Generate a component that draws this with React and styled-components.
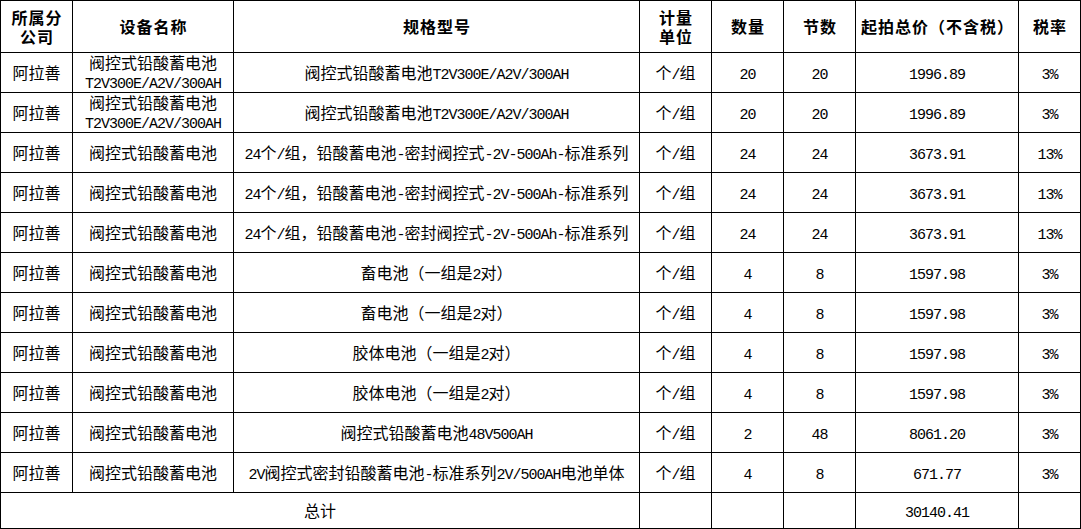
import styled, { createGlobalStyle } from "styled-components";

const GlobalStyle = createGlobalStyle`
  html, body {
    margin: 0;
    padding: 0;
    background: #fff;
  }
  body {
    font-family: "Noto Sans CJK SC", "Liberation Sans", sans-serif;
    color: #000;
  }
`;

const widths = [72, 161, 406, 72, 72, 72, 163, 62];

const heads = ["所属分\n公司", "设备名称", "规格型号", "计量\n单位", "数量", "节数", "起拍总价（不含税）", "税率"];

const SAMPLE_A = ["阿拉善", "阀控式铅酸蓄电池\nT2V300E/A2V/300AH", "阀控式铅酸蓄电池T2V300E/A2V/300AH", "个/组", "20", "20", "1996.89", "3%"];
const SAMPLE_B = ["阿拉善", "阀控式铅酸蓄电池", "24个/组，铅酸蓄电池-密封阀控式-2V-500Ah-标准系列", "个/组", "24", "24", "3673.91", "13%"];
const SAMPLE_C = ["阿拉善", "阀控式铅酸蓄电池", "畜电池（一组是2对）", "个/组", "4", "8", "1597.98", "3%"];
const SAMPLE_D = ["阿拉善", "阀控式铅酸蓄电池", "胶体电池（一组是2对）", "个/组", "4", "8", "1597.98", "3%"];

const rows = [
  SAMPLE_A,
  SAMPLE_A,
  SAMPLE_B,
  SAMPLE_B,
  SAMPLE_B,
  SAMPLE_C,
  SAMPLE_C,
  SAMPLE_D,
  SAMPLE_D,
  ["阿拉善", "阀控式铅酸蓄电池", "阀控式铅酸蓄电池48V500AH", "个/组", "2", "48", "8061.20", "3%"],
  ["阿拉善", "阀控式铅酸蓄电池", "2V阀控式密封铅酸蓄电池-标准系列2V/500AH电池单体", "个/组", "4", "8", "671.77", "3%"],
];

// split latin runs so they get the narrow half-width look
const mix = (text) =>
  text.split("\n").map((line, i) => (
    <Line key={i}>
      {line.split(/([\x00-\x7F]+)/).map((part, j) =>
        /^[\x00-\x7F]+$/.test(part) ? <Half key={j}>{part}</Half> : part
      )}
    </Line>
  ));

const App = () => {
  return (
    <>
      <GlobalStyle />
      <Table>
        <colgroup>
          {widths.map((w, i) => (
            <col key={i} style={{ width: w }} />
          ))}
        </colgroup>
        <thead>
          <HeadRow>
            {heads.map((h, i) => (
              <Th key={i}>{mix(h)}</Th>
            ))}
          </HeadRow>
        </thead>
        <tbody>
          {rows.map((r, i) => (
            <Row key={i}>
              {r.map((c, j) => (
                <Td key={j}>{mix(c)}</Td>
              ))}
            </Row>
          ))}
          <TotalRow>
            <Td colSpan={3}>总计</Td>
            <Td />
            <Td />
            <Td />
            <Td>{mix("30140.41")}</Td>
            <Td />
          </TotalRow>
        </tbody>
      </Table>
    </>
  );
};

const Table = styled.table`
  border-collapse: collapse;
  table-layout: fixed;
  width: 1081px;
  font-size: 16px;
  line-height: 19px;
`;

const HeadRow = styled.tr`
  height: 52px;
`;

const Row = styled.tr`
  height: 40px;
`;

const TotalRow = styled.tr`
  height: 36px;
`;

const Th = styled.th`
  border: 1px solid #000;
  padding: 0 0 0 1px;
  text-align: center;
  vertical-align: middle;
  font-weight: 700;
  letter-spacing: 1px;
  white-space: nowrap;
`;

const Td = styled.td`
  border: 1px solid #000;
  padding: 0;
  text-align: center;
  vertical-align: middle;
  font-weight: 400;
  white-space: nowrap;
`;

const Line = styled.div`
  display: block;
`;

const Half = styled.span`
  font-family: "Liberation Mono", "DejaVu Sans Mono", monospace;
  font-size: 15px;
  letter-spacing: -1px;
  line-height: 1;
`;

export default App;
